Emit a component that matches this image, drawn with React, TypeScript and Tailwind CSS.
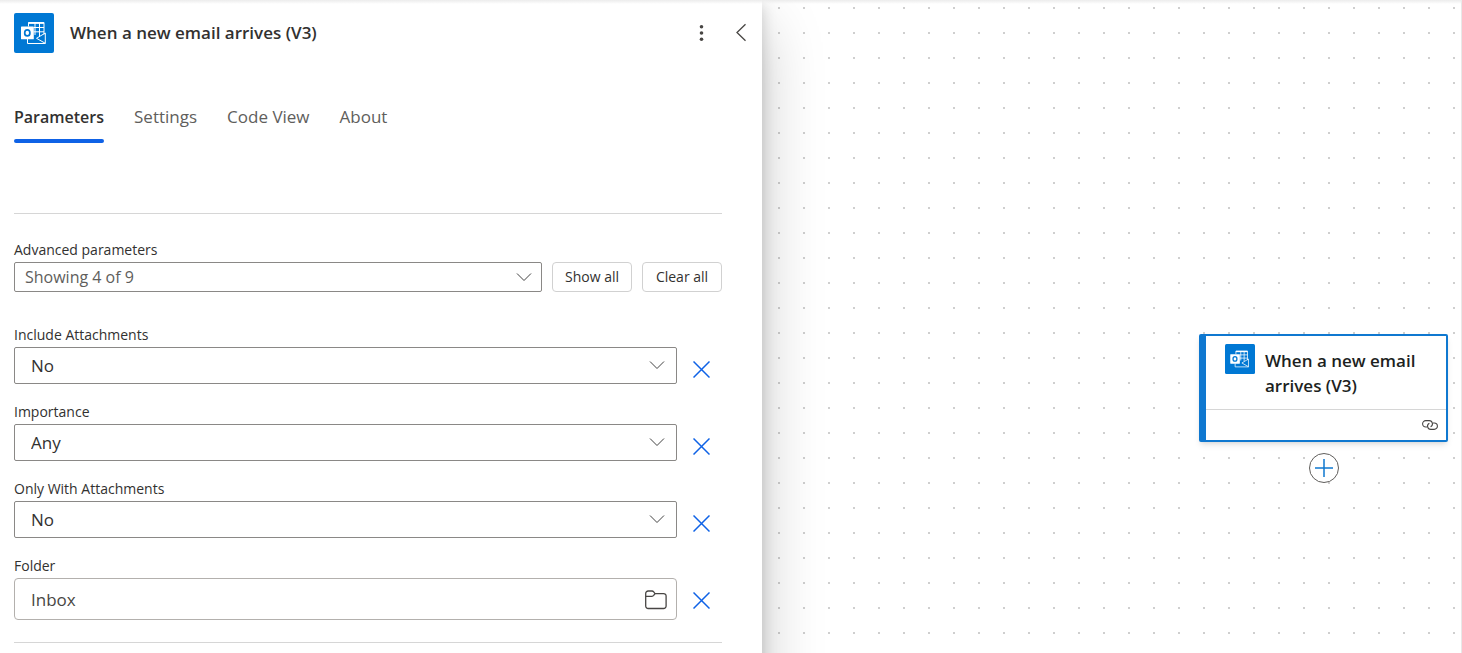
import { useState } from "react";
import type { ReactNode } from "react";

function OutlookIcon({ className }: { className: string }) {
  return (
    <svg viewBox="0 0 40 40" className={className} aria-hidden="true">
      <rect width="40" height="40" rx="2" fill="#0078d4" />
      <g fill="none" stroke="#fff" strokeWidth="1">
        <path d="M14.5 13.500V9.500H30v12" />
        <path d="M14.5 10H30" strokeWidth="1.800" />
        <path d="M19.500 14.500H30M19.500 18.800H30M21 10v12M25.500 10v13" />
        <path d="M13.500 26v4.500H31.300V20L22.500 25.300l8.800 5" />
      </g>
      <rect x="7" y="13.500" width="12.800" height="12.800" rx="0.600" fill="#fff" />
      <ellipse cx="13.300" cy="19.900" rx="2.600" ry="3" fill="none" stroke="#0078d4" strokeWidth="1.700" />
    </svg>
  );
}

function Chevron({ className }: { className: string }) {
  return (
    <svg viewBox="0 0 16 16" className={className} fill="none" stroke="#424242" aria-hidden="true">
      <path d="M1 4.500l7 7 7-7" />
    </svg>
  );
}

const tabs = ["Parameters", "Settings", "Code View", "About"];

function Field({ id, label, children }: { id: string; label: string; children: ReactNode }) {
  return (
    <div>
      <label htmlFor={id} className="mb-0.5 block text-sm leading-5">
        {label}
      </label>
      <div className="flex items-start gap-1">
        <div className="relative flex-1">{children}</div>
        <button type="button" aria-label={`Remove ${label}`} className="flex w-[41px] justify-center pt-3.5">
          <svg viewBox="0 0 17 17" className="size-[17px]" fill="none" stroke="#0f62e6" strokeWidth="1.500" aria-hidden="true">
            <path d="M0.500 0.500l16 16M16.500 0.500l-16 16" />
          </svg>
        </button>
      </div>
    </div>
  );
}

function SelectField({ id, label, options }: { id: string; label: string; options: string[] }) {
  return (
    <Field id={id} label={label}>
      <select
        id={id}
        className="block h-[37px] w-full appearance-none rounded-xs border border-[#8a8886] bg-white px-4 text-[17px] text-[#323130]"
      >
        {options.map((option) => (
          <option key={option}>{option}</option>
        ))}
      </select>
      <Chevron className="pointer-events-none absolute top-2.5 right-3 size-4" />
    </Field>
  );
}

export default function App() {
  const [active, setActive] = useState("Parameters");

  return (
    <div className="relative grid min-h-screen grid-cols-[381fr_350fr] overflow-clip bg-white font-['Open_Sans','Noto_Sans',sans-serif] text-[#323130]">
      <div className="pointer-events-none absolute inset-x-0 top-0 z-20 h-1 bg-linear-to-b from-[#ececec] to-transparent" />
      <aside className="relative z-10 bg-white before:absolute before:inset-x-0 before:top-0 before:-bottom-20 before:shadow-[0_26px_58px_rgba(0,0,0,0.22),0_5px_14px_rgba(0,0,0,0.18)]">
        <div className="relative h-full bg-white pt-[13px] pb-2.5 pl-3.5">
          <header className="flex items-center gap-4 pr-[13px]">
            <OutlookIcon className="size-10" />
            <h1 className="flex-1 text-[17px] font-semibold">When a new email arrives (V3)</h1>
            <button type="button" aria-label="More commands" className="p-2">
              <svg viewBox="0 0 16 20" className="h-5 w-4" fill="#484644" aria-hidden="true">
                <circle cx="8.500" cy="3.700" r="1.800" />
                <circle cx="8.500" cy="10" r="1.800" />
                <circle cx="8.500" cy="16.300" r="1.800" />
              </svg>
            </button>
            <button type="button" aria-label="Collapse panel">
              <svg viewBox="0 0 16 20" className="h-5 w-4" fill="none" stroke="#484644" strokeWidth="1.300" aria-hidden="true">
                <path d="M12.500 1.300L4 9.500l8.500 8.200" />
              </svg>
            </button>
          </header>

          <div className="pr-10">
            <div role="tablist" className="mt-[52px] flex gap-[30px]">
              {tabs.map((tab) => (
                <button
                  key={tab}
                  type="button"
                  role="tab"
                  aria-selected={tab === active}
                  onClick={() => setActive(tab)}
                  className={
                    tab === active
                      ? "text-base leading-6 font-semibold after:mt-2.5 after:block after:h-1 after:rounded-sm after:bg-[#0f62e6]"
                      : "text-[17px] leading-6 text-[#605e5c] after:mt-2.5 after:block after:h-1"
                  }
                >
                  {tab}
                </button>
              ))}
            </div>

            <hr className="mt-[70px] border-[#d6d6d6]" />

            <div className="mt-[26px] mb-[33px]">
              <label htmlFor="advanced" className="mb-0.5 block text-sm leading-5">
                Advanced parameters
              </label>
              <div className="flex gap-2.5">
                <div className="relative flex-1">
                  <select
                    id="advanced"
                    className="block h-[30px] w-full appearance-none rounded-xs border border-[#8a8886] bg-white px-2.5 text-base text-[#605e5c]"
                  >
                    <option>Showing 4 of 9</option>
                  </select>
                  <Chevron className="pointer-events-none absolute top-[7px] right-2.5 size-4" />
                </div>
                <button type="button" className="w-20 rounded-sm border border-[#d1d1d1] text-sm">
                  Show all
                </button>
                <button type="button" className="w-20 rounded-sm border border-[#d1d1d1] text-sm">
                  Clear all
                </button>
              </div>
            </div>

            <div className="flex flex-col gap-[18px]">
              <SelectField id="include" label="Include Attachments" options={["No", "Yes"]} />
              <SelectField id="importance" label="Importance" options={["Any", "Low", "Normal", "High"]} />
              <SelectField id="only" label="Only With Attachments" options={["No", "Yes"]} />
              <Field id="folder" label="Folder">
                <input
                  id="folder"
                  defaultValue="Inbox"
                  className="block h-[42px] w-full rounded-sm border border-[#b3b0ad] bg-white pr-12 pl-4 text-[17px] text-[#484644]"
                />
                <button type="button" aria-label="Browse folders" className="absolute top-3 right-2.5">
                  <svg viewBox="0 0 22 20" className="h-5 w-[22px]" fill="none" stroke="#484644" strokeWidth="1.300" aria-hidden="true">
                    <path d="M0.700 3.500a2.500 2.500 0 0 1 2.500-2.500H7q1 0 1.700 0.900L10 3.600H18.600a2.500 2.500 0 0 1 2.500 2.500V16a2.500 2.500 0 0 1-2.500 2.500H3.200A2.500 2.500 0 0 1 0.700 16z" />
                    <path d="M0.700 6.300H7q1 0 1.700-0.900L10 3.600" />
                  </svg>
                </button>
              </Field>
            </div>

            <hr className="mt-[22px] border-[#d6d6d6]" />
          </div>
        </div>
      </aside>

      <main className="relative border-r border-[#e8e8e8] bg-[radial-gradient(circle_at_17px_8px,#cfcfcf_1px,transparent_1px)] bg-size-[25px_25px]">
        <article className="absolute top-[334px] right-[13px] w-[249px] rounded-xs border-2 border-l-[7px] border-[#0f78d0] bg-white shadow-md">
          <div className="flex gap-2.5 border-b border-[#d6d6d6] pt-2 pr-2 pb-[11px] pl-[19px]">
            <OutlookIcon className="size-[30px] shrink-0" />
            <h2 className="pt-1 text-[17px] leading-[25px] font-semibold text-[#201f1e]">When a new email arrives (V3)</h2>
          </div>
          <div className="flex justify-end px-2 py-2.5">
            <svg viewBox="0 0 16 10" className="h-2.5 w-4" fill="none" stroke="#484644" strokeWidth="1.100" aria-hidden="true">
              <path d="M5 7H3.800A3.200 3.200 0 0 1 3.800 0.600H7.200A3.200 3.200 0 0 1 8.600 6.700" />
              <path d="M11 3h1.200a3.200 3.200 0 0 1 0 6.400H8.800A3.200 3.200 0 0 1 7.400 3.300" />
            </svg>
          </div>
        </article>
        <button
          type="button"
          aria-label="Add an action"
          className="absolute top-[453px] right-[122px] flex size-[30px] items-center justify-center rounded-full border border-[#605e5c] bg-white"
        >
          <svg viewBox="0 0 18 18" className="size-[18px]" fill="none" stroke="#0f78d0" strokeWidth="1.500" aria-hidden="true">
            <path d="M9 0v18M0 9h18" />
          </svg>
        </button>
      </main>
    </div>
  );
}
